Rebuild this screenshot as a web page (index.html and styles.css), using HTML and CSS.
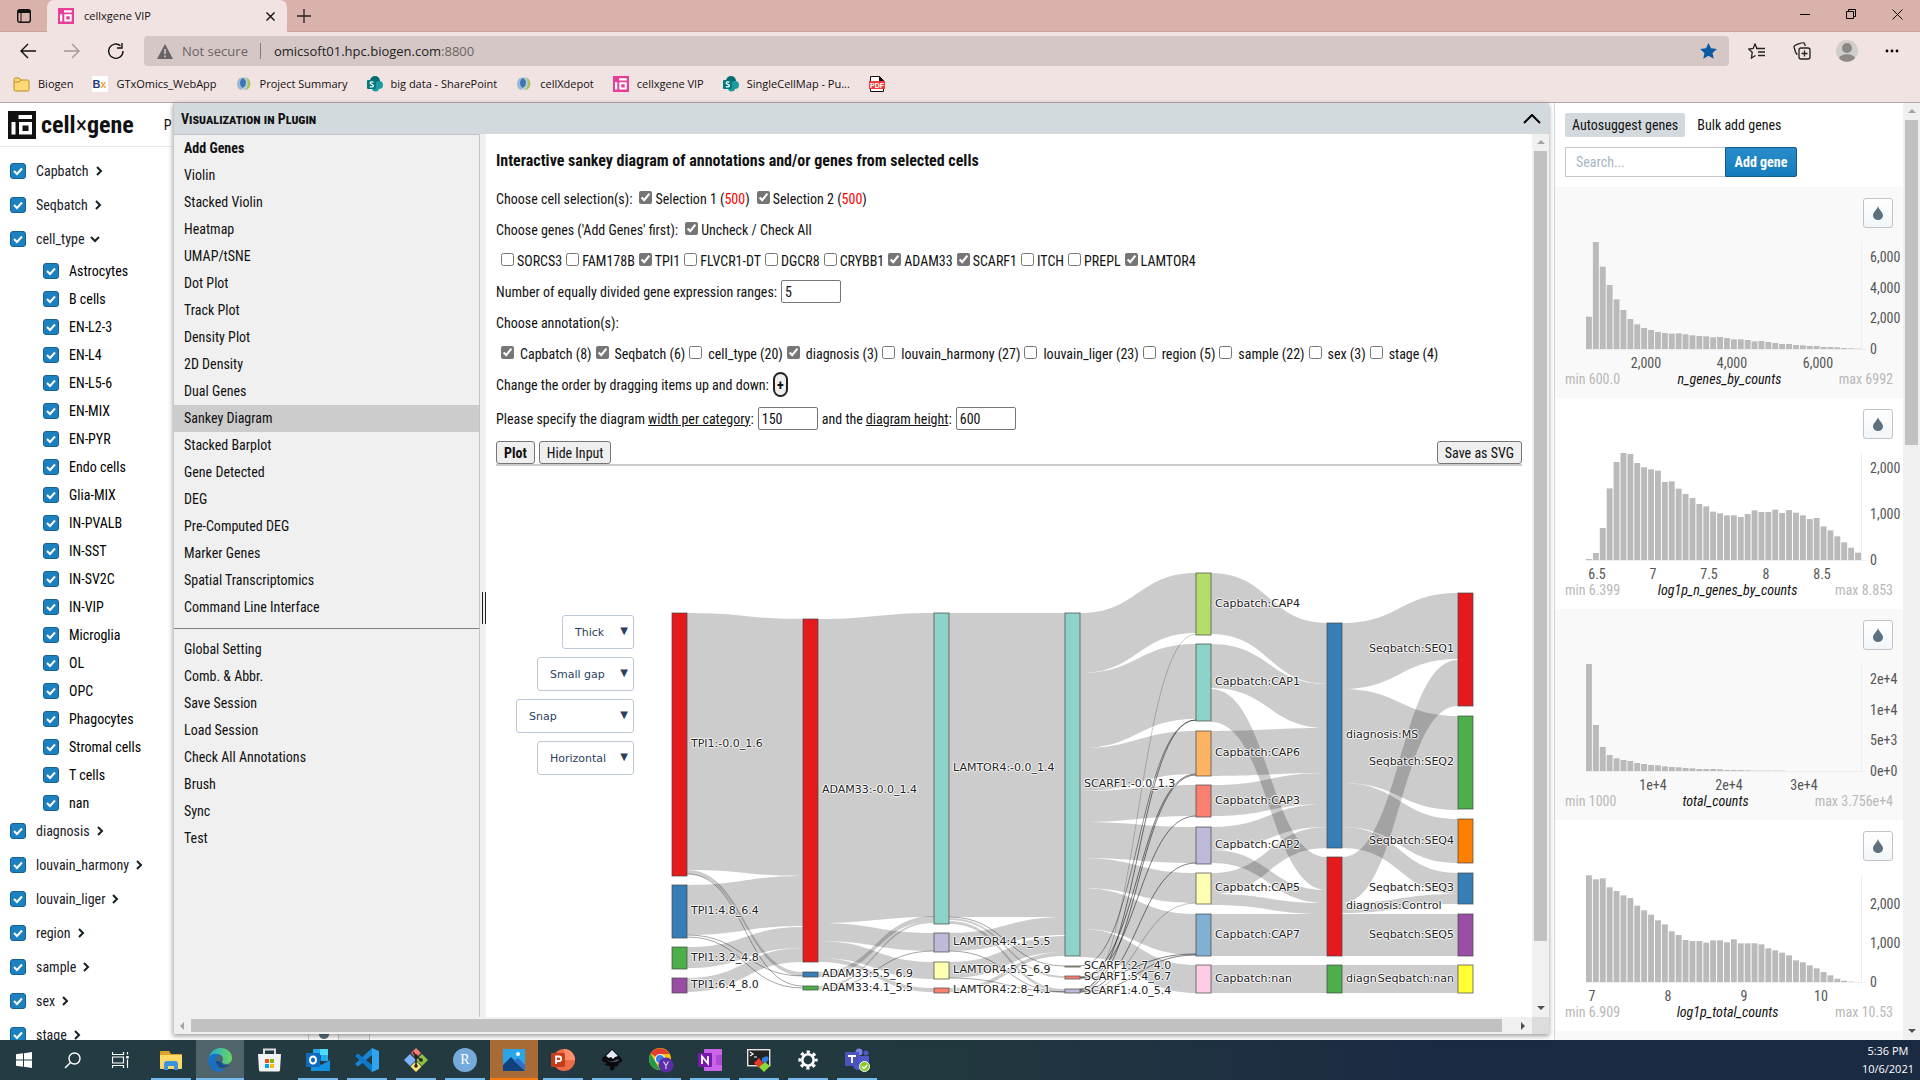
FILE: index.html
```html
<!DOCTYPE html>
<html lang="en">
<head>
<meta charset="utf-8">
<title>cellxgene VIP</title>
<link rel="stylesheet" href="styles.css">
</head>
<body>
<svg class="defs" aria-hidden="true">
  <symbol id="i-cxg" viewBox="0 0 28 28"><rect width="28" height="28" fill="currentColor"/><path d="M10.500 4H24v4H10.500zM3.500 11h4v12.500h-4zM11 11h13v12.500H11zm3.500 3.500v5.500h6v-5.500z" fill="#fff" fill-rule="evenodd"/></symbol>
  <symbol id="i-globe" viewBox="0 0 16 16"><circle cx="8" cy="7.500" r="6.500" fill="#b5cfe0"/><path d="M5 1.600A7 7 0 0 0 4.500 14C7 12 8 10 7.500 7S6 3 5 1.600z" fill="#9db9d6"/><path d="M7 2c4 2 4 7 0 10C3 10 3 4 7 2z" fill="#3d78b5"/><path d="M10 1.500a6.500 6.500 0 0 1-1 12.500c3-3 4-9 1-12.500z" fill="#a9c352"/></symbol>
  <symbol id="i-share" viewBox="0 0 16 16"><circle cx="8" cy="5" r="5" fill="#036c70"/><circle cx="12" cy="9" r="4" fill="#1a9ba1"/><circle cx="8.500" cy="12" r="3.500" fill="#1a9ba1"/><rect y="4" width="9" height="9" rx="1" fill="#03787c"/><path d="M6.500 6.300c-1-.600-3.400-.600-3.400.800 0 1.600 3.400 1 3.400 2.700 0 1.400-2.500 1.400-3.700.700" fill="none" stroke="#fff" stroke-width="1.200"/></symbol>
  <symbol id="i-right" viewBox="0 0 10 10"><path d="M3 1l4 4-4 4" fill="none" stroke="#182026" stroke-width="2"/></symbol>
  <symbol id="i-down" viewBox="0 0 10 10"><path d="M1 3l4 4 4-4" fill="none" stroke="#182026" stroke-width="2"/></symbol>
  <symbol id="i-drop" viewBox="0 0 10 14"><path d="M5 0C4 4 0 6 0 9.500a5 4.500 0 0 0 10 0C10 6 6 4 5 0z" fill="#5c7080"/></symbol>
</svg>

<header class="browser">
  <div class="tabstrip">
    <button class="tabmenu" aria-label="Tab actions"><svg width="14" height="14" viewBox="0 0 14 14"><rect x=".700" y=".700" width="12.600" height="12.600" rx="2" fill="none" stroke="#111" stroke-width="1.400"/><path d="M1 1h12v3H1z" fill="#111"/><path d="M4 3v10" stroke="#111"/></svg></button>
    <div class="tab"><svg class="pink" width="16" height="16"><use href="#i-cxg"/></svg><span>cellxgene VIP</span><button aria-label="Close tab"><svg width="9" height="9" viewBox="0 0 9 9"><path d="M.500.500l8 8m0-8l-8 8" stroke="#111" stroke-width="1.400"/></svg></button></div>
    <button class="newtab" aria-label="New tab"><svg width="14" height="14" viewBox="0 0 14 14"><path d="M7 0v14M0 7h14" stroke="#222" stroke-width="1.300"/></svg></button>
    <div class="winctl">
      <button aria-label="Minimize"><svg width="11" height="11"><path d="M0 5.500h10" stroke="#000"/></svg></button>
      <button aria-label="Restore"><svg width="11" height="11"><path d="M.500 2.500h7v7h-7zM2.500 2.500v-2h7v7h-2" fill="none" stroke="#000"/></svg></button>
      <button aria-label="Close"><svg width="11" height="11"><path d="M.500.500l10 10m0-10l-10 10" stroke="#000"/></svg></button>
    </div>
  </div>
  <div class="toolbar">
    <button aria-label="Back"><svg width="18" height="16" viewBox="0 0 18 16"><path d="M17 8H2m7-7L2 8l7 7" fill="none" stroke="#111" stroke-width="1.400"/></svg></button>
    <button aria-label="Forward"><svg width="18" height="16" viewBox="0 0 18 16"><path d="M1 8h15M9 1l7 7-7 7" fill="none" stroke="#a39998" stroke-width="1.400"/></svg></button>
    <button aria-label="Refresh"><svg width="18" height="18" viewBox="0 0 18 18"><path d="M16 9a7.200 7.200 0 1 1-2.500-5.300M15 1v5h-5" fill="none" stroke="#111" stroke-width="1.400"/></svg></button>
    <div class="address">
      <svg width="16" height="15" viewBox="0 0 16 15"><path d="M8 0l8 15H0z" fill="#666"/><path d="M8 5v5M8 11.500v1.800" stroke="#d5c7c6" stroke-width="1.600"/></svg>
      <span class="insecure">Not secure</span>
      <div class="url"><span>omicsoft01.hpc.biogen.com</span>:8800</div>
      <svg width="17" height="16" viewBox="0 0 24 23"><path d="M12 0l3.600 7.500 8.400 1-6.200 5.700 1.700 8.300L12 18.500l-7.500 4 1.700-8.300L0 8.500l8.400-1z" fill="#0b5aa6"/></svg>
    </div>
    <div class="tools">
      <button aria-label="Favorites"><svg width="18" height="16" viewBox="0 0 18 16"><path d="M9 5.500L7 1 5.200 5.400.800 6l3.400 3.200L3.500 15l4-2.500M8 5.500h9M10 9h7M10 12.500h7" fill="none" stroke="#222" stroke-width="1.300"/></svg></button>
      <button aria-label="Collections"><svg width="18" height="18" viewBox="0 0 18 18"><rect x="6" y="6" width="11" height="11" rx="2" fill="none" stroke="#222" stroke-width="1.300"/><path d="M11.500 8.500v6M8.500 11.500h6M4.500 12.500C3 12 1.500 7 1 4.500c0-1.500 9-4.500 10-3.500l1.500 3" fill="none" stroke="#222" stroke-width="1.300"/></svg></button>
      <button aria-label="Profile"><svg width="22" height="22" viewBox="0 0 22 22"><circle cx="11" cy="11" r="11" fill="#d0cdcb"/><circle cx="11" cy="8" r="5" fill="#8b8886"/><path d="M3 18c2-5 14-5 16 0-4 5-12 5-16 0z" fill="#8b8886"/></svg></button>
      <button aria-label="More"><svg width="14" height="4"><circle cx="2" cy="2" r="1.400"/><circle cx="7" cy="2" r="1.400"/><circle cx="12" cy="2" r="1.400"/></svg></button>
    </div>
  </div>
  <nav class="bookmarks" aria-label="Bookmarks">
    <a href="#"><svg width="17" height="15" viewBox="0 0 17 15"><path d="M1 2.500Q1 1 2.500 1H6l2 2h6.500Q16 3 16 4.500v8q0 1.500-1.500 1.500h-12Q1 14 1 12.500z" fill="#ffd978" stroke="#b98b1c"/><path d="M1.500 5H6l2-2" fill="none" stroke="#b98b1c"/></svg>Biogen</a>
    <a href="#"><span class="bx">B<i>x</i></span>GTxOmics_WebApp</a>
    <a href="#"><svg width="16" height="16"><use href="#i-globe"/></svg>Project Summary</a>
    <a href="#"><svg width="16" height="16"><use href="#i-share"/></svg>big data - SharePoint</a>
    <a href="#"><svg width="16" height="16"><use href="#i-globe"/></svg>cellXdepot</a>
    <a href="#"><svg class="pink" width="16" height="16"><use href="#i-cxg"/></svg>cellxgene VIP</a>
    <a href="#"><svg width="16" height="16"><use href="#i-share"/></svg>SingleCellMap - Pu...</a>
    <a href="#" aria-label="PDF"><svg class="pdf" width="16" height="16" viewBox="0 0 16 16"><path d="M1.500.500h9l4 4v11h-13z" fill="#fff" stroke="#111"/><path d="M10 0v5h5" fill="#111"/><rect y="5" width="16" height="8" fill="#f03c3c"/><text x="8" y="12" text-anchor="middle">PDF</text></svg></a>
  </nav>
</header>

<main class="app">
  <aside class="cats">
    <div class="brand"><svg width="28" height="28"><use href="#i-cxg"/></svg><strong>cell<small>×</small>gene</strong><span>P</span></div>
    <div class="catlist" id="cats"></div>
  </aside>

  <div class="stage">
    <section class="plugin">
      <header class="plughead"><h1>Visualization in Plugin</h1><button aria-label="Collapse"><svg width="18" height="10" viewBox="0 0 18 10"><path d="M1 9l8-8 8 8" fill="none" stroke="#000" stroke-width="2"/></svg></button></header>
      <div class="plugbody">
        <nav class="menu" id="menu" aria-label="Plugin functions"></nav>
        <div class="splitter"><i></i></div>
        <div class="content">
          <h2>Interactive sankey diagram of annotations and/or genes from selected cells</h2>
          <div class="row sel">Choose cell selection(s): <label><input type="checkbox" checked>Selection 1 (<b>500</b>)</label><label><input type="checkbox" checked>Selection 2 (<b>500</b>)</label></div>
          <div class="row sel">Choose genes ('Add Genes' first): <label><input type="checkbox" checked>Uncheck / Check All</label></div>
          <div class="row genes" id="genes"></div>
          <div class="row"><label for="nr">Number of equally divided gene expression ranges:</label><input id="nr" type="text" value="5"></div>
          <div class="row">Choose annotation(s):</div>
          <div class="row annos" id="annos"></div>
          <div class="row">Change the order by dragging items up and down: <button class="plus">+</button></div>
          <div class="row last"><label for="wc">Please specify the diagram <u>width per category</u>:</label><input id="wc" type="text" value="150"><label for="dh">and the <u>diagram height</u>:</label><input id="dh" type="text" value="600"></div>
          <div class="actions"><button class="btn"><strong>Plot</strong></button><button class="btn">Hide Input</button><button class="btn save">Save as SVG</button></div>
          <div class="chart">
            <div class="opts">
              <span class="pick"><select class="w1" aria-label="Node thickness"><option>Thick</option></select></span>
              <span class="pick"><select class="w2" aria-label="Gap"><option>Small gap</option></select></span>
              <span class="pick"><select class="w3" aria-label="Arrangement"><option>Snap</option></select></span>
              <span class="pick"><select class="w2" aria-label="Orientation"><option>Horizontal</option></select></span>
            </div>
            <svg id="sankey" class="sankey" width="850" height="440" viewBox="650 563 850 440" role="img" aria-label="Sankey diagram"></svg>
          </div>
        </div>
        <div class="vbar"><i class="up"></i><i class="track"><i class="thumb"></i></i><i class="dn"></i></div>
      </div>
      <div class="hbar"><i class="lf"></i><i class="track"><i class="thumb"></i></i><i class="rt"></i><i class="corner"></i></div>
    </section>
    <div class="under"><span><svg width="10" height="14"><use href="#i-drop"/></svg></span><span></span></div>
  </div>

  <aside class="right">
    <div class="panel">
      <div class="genetabs"><button class="on">Autosuggest genes</button><button>Bulk add genes</button></div>
      <div class="search"><input type="text" placeholder="Search..." aria-label="Search genes"><button>Add gene</button></div>
      <div id="hists"></div>
    </div>
    <div class="vbar page"><i class="up"></i><i class="track"><i class="thumb"></i></i><i class="dn"></i></div>
  </aside>
</main>

<footer class="taskbar">
  <button aria-label="Start"><svg width="16" height="16" viewBox="0 0 16 16"><path d="M0 2.300L7 1.300V7.500H0zM8 1.200L16 0v7.500H8zM0 8.500h7v6.200l-7-1zM8 8.500h8V16l-8-1.200z" fill="#fff"/></svg></button>
  <button aria-label="Search"><svg width="17" height="17" viewBox="0 0 17 17"><circle cx="10.500" cy="6.500" r="5.500" fill="none" stroke="#fff" stroke-width="1.400"/><path d="M6.500 10.500L1 16" stroke="#fff" stroke-width="1.400"/></svg></button>
  <button class="gap" aria-label="Task view"><svg width="17" height="16" viewBox="0 0 17 16"><path d="M.500 0v2.500h11V0M.500 16v-2.500h11V16M.500 5h11v6H.500zM15.500 0v2.500M15.500 7.500V16" fill="none" stroke="#fff" stroke-width="1.200"/><rect x="14.200" y="4" width="2.500" height="2.500" fill="#fff"/></svg></button>
  <button class="run" aria-label="File Explorer"><svg width="22" height="19" viewBox="0 0 22 19"><path d="M0 1q0-1 1-1h8l2 3h10q1 0 1 1v13H0z" fill="#e0a12b"/><path d="M0 4h22v13q0 1-1 1H1q-1 0-1-1z" fill="#ffd968"/><path d="M4 19v-6q0-3 3-3h8q3 0 3 3v6h-4v-4H8v4z" fill="#3d93dd"/></svg></button>
  <button class="run edge" aria-label="Microsoft Edge"><svg width="24" height="24" viewBox="0 0 24 24"><defs><linearGradient id="eg" x1="0" x2="1"><stop offset="0" stop-color="#1ea7e4"/><stop offset="1" stop-color="#6ad75a"/></linearGradient></defs><path d="M.500 12C1 5 6 0 12.500 0 20 0 24 5 24 10c0 4-3 6-6 6s-4-1.500-4-2c0-.500 1-1 1-3 0-3-3-5-6.500-5S1 8 .500 12z" fill="url(#eg)"/><path d="M.500 12c0-4 3.500-6 7-6 3 0 4 1 4 1-3 1-4 4-4 7 0 5 5 9 10 7-5 6-17 2-17-9z" fill="#1471c7"/><path d="M8 13c0 5 5 8 9 6.500 2-.500 4-2 5-3-4 2-9 1-9-3z" fill="#0c4f9a"/></svg></button>
  <button aria-label="Microsoft Store"><svg width="23" height="24" viewBox="0 0 23 24"><path d="M6 8V1.500h11V8" fill="none" stroke="#ddd" stroke-width="2"/><path d="M0 6h23l-1 16q0 1.500-1.500 1.500h-18Q1 23.500 1 22z" fill="#f3f3f3"/><path d="M7 11h4v4H7z" fill="#f25022"/><path d="M12 11h4v4h-4z" fill="#7fba00"/><path d="M7 16h4v4H7z" fill="#00a4ef"/><path d="M12 16h4v4h-4z" fill="#ffb900"/></svg></button>
  <button class="run" aria-label="Outlook"><svg width="24" height="22" viewBox="0 0 24 22"><path d="M7 0h15v12H7z" fill="#28a8ea"/><path d="M14 0h8v6h-8z" fill="#50d9ff"/><path d="M7 6h8v6H7z" fill="#0364b8"/><path d="M5 11l10 5 9-5v11H5z" fill="#1490df"/><rect y="4" width="14" height="14" rx="1" fill="#0f6cbd"/><ellipse cx="7" cy="11" rx="3" ry="3.500" fill="none" stroke="#fff" stroke-width="2"/></svg></button>
  <button class="run" aria-label="VS Code"><svg width="24" height="24" viewBox="0 0 24 24"><path d="M17 0l7 3v18l-7 3z" fill="#2fa4f1"/><path d="M17 0v7L3 18.500l-3-2.500z" fill="#1a86d6"/><path d="M17 24v-7L3 5.500 0 8z" fill="#0f79c9"/></svg></button>
  <button class="run" aria-label="Git"><svg width="24" height="24" viewBox="0 0 24 24"><path d="M12 0l5 5-5 5-5-5z" fill="#f27d75"/><path d="M6 6l6 6-6 6-6-6z" fill="#80b3ff"/><path d="M18 6l6 6-6 6-6-6z" fill="#8dc149"/><path d="M12 13l5.500 5.500L12 24l-5.500-5.500z" fill="#ffe673"/><path d="M9 4l3 4v10M12 8l5 4" fill="none" stroke="#222" stroke-width="1.500"/><circle cx="12" cy="18" r="1.800" fill="#222"/><circle cx="17" cy="12" r="1.800" fill="#222"/><circle cx="12" cy="8" r="1.800" fill="#222"/></svg></button>
  <button class="run" aria-label="R"><span class="rlogo">R</span></button>
  <button class="run photos" aria-label="Photos"><svg width="22" height="22" viewBox="0 0 22 22"><rect width="22" height="22" fill="#2aa5ea"/><path d="M0 16l8-8 14 14H0z" fill="#11427e"/><path d="M11 12l4-3 7 7v6z" fill="#2f6fc4"/><circle cx="15" cy="5" r="2" fill="#fff"/></svg></button>
  <button class="run" aria-label="PowerPoint"><svg width="24" height="22" viewBox="0 0 24 22"><circle cx="13" cy="11" r="11" fill="#ed6c47"/><path d="M13 0a11 11 0 0 1 11 11H13z" fill="#ff8f6b"/><rect y="4" width="14" height="14" rx="1" fill="#c43e1c"/><path d="M5 15V7.500h3q2.200 0 2.200 2.300T8 12H5" fill="none" stroke="#fff" stroke-width="1.800"/></svg></button>
  <button class="run" aria-label="Inkscape"><svg width="22" height="22" viewBox="0 0 22 22"><path d="M11 0l9 9q3 3-1 4.500-3 1-1 2.500-3 1.500-4 1.500l-1 3-2 1.500-2-2v-3q-5 0-5-2 4-1-1-2-4-1.500-1-4.500z" fill="#0a0a0a"/><path d="M11 1l6 6-3 1-2 2-2-2-2 1-3-2z" fill="#e3ebf7"/><path d="M3 10q8 4 12 1 2 0 4-1-5 6-16 0z" fill="#5a6c8a"/></svg></button>
  <button class="run" aria-label="Chrome"><svg width="25" height="25" viewBox="0 0 25 25"><circle cx="11" cy="11" r="11" fill="#fbc116"/><path d="M11 11L1.500 5.500A11 11 0 0 1 20.500 6H11z" fill="#e33b2e"/><path d="M1.500 5.500l5 8.500L11 22A11 11 0 0 1 1.500 5.500z" fill="#229a4b"/><circle cx="11" cy="11" r="5" fill="#fff"/><circle cx="11" cy="11" r="4" fill="#3b7ded"/><circle cx="17" cy="17" r="7.500" fill="#5b2ea6"/><path d="M14.500 13.500l2.500 4 2.500-4M17 17v4" fill="none" stroke="#d9c8ff" stroke-width="1.200"/></svg></button>
  <button class="run" aria-label="OneNote"><svg width="24" height="22" viewBox="0 0 24 22"><rect x="6" width="18" height="22" rx="1" fill="#ca64ea"/><path d="M18 6h6v5h-6zM18 11h6v5h-6z" fill="#ae4bd5"/><rect y="4" width="14" height="14" rx="1" fill="#7719aa"/><path d="M4 15V7.500l6 7V7" fill="none" stroke="#fff" stroke-width="1.800"/></svg></button>
  <button class="run" aria-label="Terminal"><svg width="24" height="24" viewBox="0 0 24 24"><rect x=".700" y="1.700" width="22" height="16" fill="#222" stroke="#e5e5e5" stroke-width="1.400"/><path d="M3 4l3 2-3 2M7 9h3" fill="none" stroke="#fff" stroke-width="1.200"/><path d="M7 15l5-5 4 5-4 5z" fill="#e8392b"/><path d="M15 10l5-2 2 3-3 4-4-1z" fill="#2f7de0"/><path d="M12 19l6-5 5 4-6 6z" fill="#8dd63a"/></svg></button>
  <button class="run" aria-label="Settings"><svg width="20" height="20" viewBox="0 0 20 20"><circle cx="10" cy="10" r="5.700" fill="none" stroke="#fff" stroke-width="2.600"/><circle cx="10" cy="10" r="8.200" fill="none" stroke="#fff" stroke-width="2.800" stroke-dasharray="3.220 3.220" stroke-dashoffset="1.600"/></svg></button>
  <button class="run" aria-label="Teams"><svg width="25" height="24" viewBox="0 0 25 24"><circle cx="14" cy="4" r="3.500" fill="#7b83eb"/><circle cx="21" cy="5" r="2.500" fill="#5059c9"/><path d="M8 8h16v9q0 4-4 5h-8q-4-1-4-6z" fill="#5059c9"/><rect y="4" width="14" height="14" rx="1" fill="#4b53bc"/><path d="M3 8h8M7 8v7" stroke="#fff" stroke-width="1.800"/><circle cx="19.500" cy="18.500" r="5" fill="#8ac926" stroke="#fff"/><path d="M17 18.500l2 2 3-3.500" fill="none" stroke="#fff" stroke-width="1.400"/></svg></button>
  <div class="clock"><span>5:36 PM</span><span>10/6/2021</span></div>
</footer>
<script src="app.js"></script>
</body>
</html>
```
FILE: styles.css
```css
* { box-sizing: border-box; }
html, body { height: 100%; }
body { margin: 0; display: flex; flex-direction: column; overflow: hidden; background: #fff; color: #111; font: 14px/18px "Roboto Condensed", Roboto, sans-serif; }
button, input, select { font: inherit; color: inherit; margin: 0; padding: 0; }
button { background: none; border: 0; display: flex; align-items: center; justify-content: center; }
svg { display: block; flex: none; }
.defs { position: absolute; width: 0; height: 0; }
a { color: inherit; text-decoration: none; }
.pink { color: #e83e98; }

/* Browser frame */
.browser { flex: none; height: 103px; background: #f1e3e1; border-bottom: 1px solid #b5a7a9; font: 11px/16px "Open Sans", "Noto Sans", sans-serif; }
.tabstrip { display: flex; height: 32px; background: #d9b2ac; box-shadow: inset 0 -1px #cfa39d; }
.tabmenu { width: 47px; }
.tab { display: flex; align-items: center; width: 240px; padding: 0 12px 0 11px; gap: 10px; background: #f1e3e1; border-radius: 7px 7px 0 0; }
.tab span { flex: 1; }
.newtab { width: 34px; }
.winctl { display: flex; margin-left: auto; }
.winctl button { width: 46px; height: 28px; }
.toolbar { display: flex; align-items: center; height: 38px; padding: 0 6px; }
.toolbar > button { width: 44px; height: 36px; }
.address { flex: 1; display: flex; align-items: center; height: 30px; margin: 0 5px 0 6px; padding: 0 12px 0 13px; background: #d5c7c6; border-radius: 4px; font-size: 13px; color: #6b6463; }
.insecure { margin-left: 9px; padding-right: 12px; border-right: 1px solid #857c7b; }
.url { flex: 1; margin-left: 13px; }
.url span { color: #222; }
.tools { display: flex; }
.tools button { width: 45px; height: 36px; }
.bookmarks { display: flex; gap: 19px; height: 28px; padding-left: 13px; align-items: center; }
.bookmarks a { display: flex; align-items: center; gap: 8px; }
.bx { width: 16px; background: #fff; color: #2b3a80; font: bold 11px/16px "Liberation Sans", sans-serif; }
.bx i { color: #eda33a; font-style: normal; }
.pdf text { fill: #fff; font: bold 7px "Liberation Sans", sans-serif; }

/* Application */
.app { flex: 1; min-height: 0; display: flex; }
.cats { flex: none; width: 173px; overflow: hidden; display: flex; flex-direction: column; }
.brand { flex: none; display: flex; align-items: center; height: 44px; padding: 1px 0 0 8px; border-bottom: 1px solid #e6e9eb; }
.brand strong { margin-left: 5px; font-size: 24px; line-height: 28px; }
.brand small { font-size: 24px; font-weight: 400; }
.brand span { margin-left: 30px; }
.catlist { padding-top: 7px; }
.cat, .leaf { display: flex; align-items: center; gap: 10px; height: 34px; padding-left: 10px; color: #182026; }
.cat svg { margin-left: -5px; }
.leaves { margin: 1px 0 -3px; }
.leaf { height: 28px; padding-left: 43px; color: #000; }
.cats input { appearance: none; width: 16px; height: 16px; border-radius: 3px; border: 1px solid #136196; background: #1d80bf url("data:image/svg+xml,%3Csvg xmlns='http://www.w3.org/2000/svg' viewBox='0 0 14 14'%3E%3Cpath d='M3 7l3 3 5-5.500' fill='none' stroke='white' stroke-width='2'/%3E%3C/svg%3E") center; }

.stage { flex: 1; min-width: 0; display: flex; flex-direction: column; margin-right: 5px; }
.plugin { position: relative; flex: 1; min-height: 0; display: flex; flex-direction: column; background: #fff; border-left: 1px solid #c9c9c9; box-shadow: 0 2px 5px rgba(0,0,0,.4); }
.plughead { flex: none; display: flex; align-items: center; justify-content: space-between; height: 31px; padding: 0 8px 0 7px; background: #d3dadd; }
h1 { margin: 0; font-size: 14px; font-variant: small-caps; }
.plugbody { flex: 1; min-height: 0; display: flex; }
.menu { flex: none; width: 306px; background: #f0f0f0; border: solid #c4c4c4; border-width: 1px 1px 0 0; overflow: hidden; }
.menu a { display: block; padding: 0 10px; line-height: 27px; }
.menu a:first-child { font-weight: 700; }
.menu .active { background: #ccc; }
.menu hr { margin: 7px 0; border: 0; border-top: 1px solid #808080; }
.splitter { flex: none; width: 6px; display: flex; align-items: center; padding: 64px 0 0 2px; background: #f0f0f0; }
.splitter i { width: 4px; height: 32px; border: solid #222; border-width: 0 1px; }
.content { flex: 1; min-width: 0; overflow: hidden; padding: 0 10px; }
h2 { margin: 0; padding-top: 3px; font-size: 16px; line-height: 47px; height: 49px; }
.row { display: flex; align-items: center; height: 31px; gap: 4px; white-space: nowrap; }
.row.last { height: 37px; }
.row input[type=checkbox] { width: 13px; height: 13px; margin: 0 0 3px; accent-color: #767676; }
.row label { display: flex; align-items: center; }
.row u { margin-left: 3px; }
.row.sel { gap: 7px; }
.row.sel input, .row.genes input { margin-right: 3px; }
.sel b { color: #f00; font-weight: 400; }
.genes { padding-left: 5px; }
.annos { padding-left: 5px; }
.annos label { gap: 6px; }
.row input[type=text] { width: 60px; height: 23px; padding: 0 3px; border: 1px solid #767676; border-radius: 2px; }
.plus { width: 15px; height: 25px; background: #efefef; border: 2px solid #222; border-radius: 8px; font-weight: 700; }
.actions { display: flex; gap: 4px; margin-top: 4px; border-bottom: 2px solid #ccc; }
.btn { height: 23px; padding: 0 7px; background: #efefef; border: 1px solid #767676; border-radius: 3px; }
.save { margin-left: auto; }
.chart { display: flex; gap: 17px; padding-top: 97px; }
.opts { flex: none; width: 138px; display: flex; flex-direction: column; align-items: flex-end; gap: 8px; padding-top: 52px; font: 11px "DejaVu Sans", sans-serif; color: #2a3f5f; }
.pick { position: relative; display: block; }
.pick::after { content: "▼"; position: absolute; right: 6px; top: 10px; font-size: 10px; pointer-events: none; }
.pick select { display: block; appearance: none; height: 34px; padding: 0 12px; background: #fff; border: 1px solid #bec8d9; border-radius: 3px; }
.w1 { width: 72px; }
.w2 { width: 97px; }
.w3 { width: 118px; }
.sankey { margin-left: -1px; }
.sankey text { font: 11px "DejaVu Sans", sans-serif; fill: #222; text-shadow: 0 0 1px #fff, 0 1px 1px #fff, 1px 0 1px #fff, -1px 0 1px #fff, 0 -1px 1px #fff; }

/* Scroll bars */
.vbar { flex: none; width: 17px; display: flex; flex-direction: column; background: #f0f0f0; }
.hbar { flex: none; height: 17px; display: flex; background: #f0f0f0; }
.vbar .track { flex: 1; padding: 0 2px; }
.hbar .track { flex: 1; padding: 2px 0; }
.track, .thumb { display: block; }
.thumb { background: #c1c1c1; }
.vbar .thumb { height: 93%; }
.page .thumb { height: 36%; }
.hbar .thumb { height: 13px; width: 99%; }
.up, .dn, .lf, .rt, .corner { flex: none; width: 17px; height: 17px; display: block; }
.corner { background: #dcdcdc; }
.up::before, .dn::before, .lf::before, .rt::before { content: ""; display: block; width: 8px; height: 4px; margin: 6px 0 0 5px; background: #a3a3a3; }
.up, .dn, .lf, .rt { overflow: hidden; display: flow-root; }
.up::before { clip-path: polygon(0 100%, 50% 0, 100% 100%); }
.dn::before { clip-path: polygon(0 0, 100% 0, 50% 100%); background: #505050; }
.lf::before, .rt::before { width: 4px; height: 8px; margin: 5px 0 0 6px; }
.lf::before { clip-path: polygon(0 50%, 100% 0, 100% 100%); }
.rt::before { clip-path: polygon(0 0, 100% 50%, 0 100%); background: #505050; }
.under { flex: none; display: flex; height: 6px; padding-left: 135px; }
.under span { width: 31px; display: flex; justify-content: center; border: solid #ccc; border-width: 0 1px; overflow: hidden; }
.under svg { margin-top: -9px; }
.under span + span { border-left: 0; background: #f5f5f5; }

/* Histogram panel */
.right { flex: none; width: 366px; display: flex; border-left: 1px solid #ccd9e0; }
.panel { flex: 1; min-width: 0; overflow: hidden; }
.genetabs { display: flex; gap: 5px; padding: 10px 10px 0; }
.genetabs button { height: 24px; padding: 0 7px; border-radius: 2px; }
.genetabs .on { background: #d3dadd; }
.search { display: flex; padding: 10px; }
.search input { width: 160px; height: 30px; padding: 0 10px; border: 1px solid #c2c8cc; border-right: 0; outline: 0; }
.search input::placeholder { color: #a7b6c2; opacity: 1; }
.search button { width: 72px; height: 30px; color: #fff; font-weight: 700; border: 1px solid #125a8c; border-radius: 0 2px 2px 0; background: linear-gradient(#2a8cca, #137cbd); }
.card { height: 211px; padding: 11px 10px 0; }
.card:nth-child(odd) { background: #f9f9f9; }
.card button { width: 30px; height: 30px; margin-left: auto; border: 1px solid #c0c4c8; border-radius: 3px; background: linear-gradient(#fff, #f2f6f9); }
.card .hist { overflow: visible; }
.hist rect { fill: #bababa; }
.hist text { fill: #555; }
.meta { display: flex; justify-content: space-between; color: #b8b8b8; }
.meta em { color: #111; }

/* Taskbar */
.taskbar { flex: none; display: flex; height: 40px; background: linear-gradient(90deg, #233b42, #22383f 50%, #1b2a43 75%); }
.taskbar button { width: 48px; margin-right: 1px; position: relative; }
.taskbar button:nth-child(-n+2) { margin-right: 0; }
.taskbar .gap { margin-right: 3px; }
.run::after { content: ""; position: absolute; left: 4px; right: 4px; bottom: 0; height: 2px; background: #76b9ed; }
.taskbar .edge { background: #50656b; }
.taskbar .photos { background: #a96b36; }
.edge::after, .photos::after { left: 0; right: 0; }
.photos::after { background: #ff7a0d; }
.rlogo { width: 24px; border-radius: 50%; background: #75aadb; color: #fff; font: 14px/24px "Liberation Serif", serif; text-align: center; }
.clock { margin-left: auto; padding: 2px 6px 0 0; display: flex; flex-direction: column; align-items: center; color: #fff; font: 11px/18px "Open Sans", "Noto Sans", sans-serif; }
```
FILE: app.js
```js
const el = id => document.getElementById(id);

// Category tree
const box = (name, cls, icon) =>
  `<label class="${cls}"><input type="checkbox" checked>${name}${icon ? `<svg width="10" height="10"><use href="#${icon}"/></svg>` : ""}</label>`;
const leaves = ["Astrocytes", "B cells", "EN-L2-3", "EN-L4", "EN-L5-6", "EN-MIX", "EN-PYR", "Endo cells", "Glia-MIX", "IN-PVALB",
  "IN-SST", "IN-SV2C", "IN-VIP", "Microglia", "OL", "OPC", "Phagocytes", "Stromal cells", "T cells", "nan"];
el("cats").innerHTML =
  ["Capbatch", "Seqbatch"].map(n => box(n, "cat", "i-right")).join("") + box("cell_type", "cat", "i-down") +
  `<div class="leaves">${leaves.map(n => box(n, "leaf")).join("")}</div>` +
  ["diagnosis", "louvain_harmony", "louvain_liger", "region", "sample", "sex", "stage"].map(n => box(n, "cat", "i-right")).join("");

// Plugin menu
const link = n => `<a href="#"${n === "Sankey Diagram" ? ' class="active"' : ""}>${n}</a>`;
el("menu").innerHTML = ["Add Genes", "Violin", "Stacked Violin", "Heatmap", "UMAP/tSNE", "Dot Plot", "Track Plot", "Density Plot", "2D Density",
  "Dual Genes", "Sankey Diagram", "Stacked Barplot", "Gene Detected", "DEG", "Pre-Computed DEG", "Marker Genes",
  "Spatial Transcriptomics", "Command Line Interface"].map(link).join("") + "<hr>" +
  ["Global Setting", "Comb. &amp; Abbr.", "Save Session", "Load Session", "Check All Annotations", "Brush", "Sync", "Test"].map(link).join("");

// Gene and annotation tick boxes; a leading * marks a ticked one
const ticks = list => list.map(n => `<label><input type="checkbox"${n[0] === "*" ? " checked" : ""}>${n.replace("*", "")}</label>`).join("");
el("genes").innerHTML = ticks(["SORCS3", "FAM178B", "*TPI1", "FLVCR1-DT", "DGCR8", "CRYBB1", "*ADAM33", "*SCARF1", "ITCH", "PREPL", "*LAMTOR4"]);
el("annos").innerHTML = ticks(["*Capbatch (8)", "*Seqbatch (6)", "cell_type (20)", "*diagnosis (3)", "louvain_harmony (27)",
  "louvain_liger (23)", "region (5)", "sample (22)", "sex (3)", "stage (4)"]);

// Sankey: columns of [label, top, bottom, colour]
const colX = [672, 803, 934, 1065, 1196, 1327, 1458];
const nodes = [
  [["TPI1:-0.0_1.6", 613, 876, "#e41a1c"], ["TPI1:4.8_6.4", 885, 938, "#377eb8"], ["TPI1:3.2_4.8", 947, 969, "#4daf4a"], ["TPI1:6.4_8.0", 978, 993, "#984ea3"]],
  [["ADAM33:-0.0_1.4", 619, 962, "#e41a1c"], ["ADAM33:5.5_6.9", 972, 977, "#377eb8"], ["ADAM33:4.1_5.5", 986, 990, "#4daf4a"]],
  [["LAMTOR4:-0.0_1.4", 613, 924, "#8dd3c7"], ["LAMTOR4:4.1_5.5", 933, 952, "#bebada"], ["LAMTOR4:5.5_6.9", 962, 979, "#ffffb3"], ["LAMTOR4:2.8_4.1", 988, 993, "#fb8072"]],
  [["SCARF1:-0.0_1.3", 613, 956, "#8dd3c7"], ["SCARF1:2.7_4.0", 966, 967, "#ffffb3"], ["SCARF1:5.4_6.7", 976, 979, "#fb8072"], ["SCARF1:4.0_5.4", 989, 993, "#bebada"]],
  [["Capbatch:CAP4", 573, 635, "#b3de69"], ["Capbatch:CAP1", 644, 721, "#8dd3c7"], ["Capbatch:CAP6", 731, 776, "#fdb462"], ["Capbatch:CAP3", 785, 817, "#fb8072"],
   ["Capbatch:CAP2", 827, 864, "#bebada"], ["Capbatch:CAP5", 873, 904, "#ffffb3"], ["Capbatch:CAP7", 914, 956, "#80b1d3"], ["Capbatch:nan", 965, 993, "#fccde5"]],
  [["diagnosis:MS", 623, 848, "#377eb8"], ["diagnosis:Control", 857, 956, "#e41a1c"], ["diagn", 965, 993, "#4daf4a"]],
  [["Seqbatch:SEQ1", 593, 706, "#e41a1c"], ["Seqbatch:SEQ2", 716, 809, "#4daf4a"], ["Seqbatch:SEQ4", 819, 863, "#ff7f00"], ["Seqbatch:SEQ3", 873, 904, "#377eb8"],
   ["Seqbatch:SEQ5", 914, 956, "#984ea3"], ["Seqbatch:nan", 965, 993, "#ffff33"]]
];
// Links per gap between columns: [source top, target top, thickness]
const links = [
  [[613, 619, 257], [870, 972, 4], [874, 986, 1], [885, 876, 50], [935, 976, 1], [937, 988, 1], [947, 927, 21], [978, 948, 14]],
  [[619, 613, 304], [923, 933, 18], [941, 962, 17], [958, 988, 4], [972, 916, 5], [986, 921, 2], [989, 951, 1]],
  [[613, 613, 304], [917, 966, 1], [918, 976, 2], [921, 989, 3], [933, 917, 18], [951, 992, 1], [962, 936, 16], [978, 992, 1], [988, 952, 4]],
  [[613, 573, 60], [673, 644, 75], [748, 731, 43], [791, 785, 31], [822, 827, 36], [858, 873, 30], [888, 914, 41], [929, 965, 28],
   [990, 634, .2], [966, 720, .6], [989, 720, 1], [977, 774, 1], [990, 775, 1], [978, 816, 1], [991, 863, 1], [992, 903, .3], [978, 954, 1], [992, 955, 1]],
  [[573, 623, 61], [644, 684, 44], [689, 857, 33], [731, 728, 45], [785, 773, 31], [827, 804, 23], [850, 890, 13], [873, 827, 21], [894, 903, 11], [914, 914, 42], [965, 965, 28]],
  [[623, 593, 66], [689, 716, 94], [783, 819, 44], [827, 873, 21], [857, 660, 46], [903, 894, 10], [914, 914, 42], [965, 965, 28]]
];
let out = "";
links.forEach((group, c) => group.forEach(([a, b, t]) => {
  const x0 = colX[c] + 15, x1 = colX[c + 1], m = (x0 + x1) / 2;
  out += t <= 1
    ? `<path d="M${x0} ${a}C${m} ${a} ${m} ${b} ${x1} ${b}" fill="none" stroke="#000" stroke-opacity="${t < 1 ? t / 2 + .1 : c === 3 ? .5 : .35}"/>`
    : `<path d="M${x0} ${a}C${m} ${a} ${m} ${b} ${x1} ${b}V${b + t}C${m} ${b + t} ${m} ${a + t} ${x0} ${a + t}z" fill="#000" fill-opacity=".2"/>`;
}));
nodes.forEach((col, c) => col.forEach(([, a, b, fill]) => {
  out += `<rect x="${colX[c]}" y="${a}" width="15" height="${b - a}" fill="${fill}" stroke="#444" stroke-opacity=".7"/>`;
}));
nodes.forEach((col, c) => col.forEach(([name, a, b]) => {
  const end = c === 6;
  out += `<text x="${end ? colX[c] - 4 : colX[c] + 19}" y="${Math.floor((a + b) / 2) + 3}" text-anchor="${end ? "end" : "start"}">${name}</text>`;
}));
el("sankey").innerHTML = out;

// Histograms: bar heights are in thirds of a pixel
const hists = [
  { name: "n_genes_by_counts", min: "600.0", max: "6992", x: [["2,000", 81], ["4,000", 167], ["6,000", 253]], y: [["6,000", 92], ["4,000", 61], ["2,000", 31], ["0", 0]],
    bars: [97,321,247,192,149,117,90,74,63,57,51,48,46,47,44,41,39,38,35,36,33,29,29,27,23,24,21,18,15,15,12,11,9,9,6,6,5,3,2,1] },
  { name: "log1p_n_genes_by_counts", min: "6.399", max: "8.853", x: [["6.5", 32], ["7", 88], ["7.5", 144], ["8", 201], ["8.5", 257]], y: [["2,000", 92], ["1,000", 46], ["0", 0]],
    bars: [3,21,96,215,294,321,318,291,278,272,268,234,236,214,198,186,168,161,145,140,134,134,129,138,149,144,144,151,141,150,142,134,123,126,101,89,71,53,37,22] },
  { name: "total_counts", min: "1000", max: "3.756e+4", x: [["1e+4", 88], ["2e+4", 164], ["3e+4", 239]], y: [["2e+4", 92], ["1e+4", 61], ["5e+3", 31], ["0e+0", 0]],
    bars: [321,138,72,48,38,33,30,24,21,18,17,14,12,11,9,8,6,6,6,5,3,3,3,2,1,1,1,1,1] },
  { name: "log1p_total_counts", min: "6.909", max: "10.53", x: [["7", 27], ["8", 103], ["9", 179], ["10", 256]], y: [["2,000", 78], ["1,000", 39], ["0", 0]],
    bars: [320,308,311,284,273,260,252,229,215,202,185,173,152,141,126,123,123,118,125,125,119,128,116,116,116,113,101,95,88,80,65,59,50,41,30,20,10,4,1] }
];
el("hists").innerHTML = hists.map(h => `<div class="card"><button aria-label="Color by ${h.name}"><svg width="10" height="14"><use href="#i-drop"/></svg></button>
<svg class="hist" width="328" height="142">
${h.bars.map((v, i) => `<rect x="${21 + i * 6.9}" y="${121 - v / 3}" width="5.9" height="${v / 3}"/>`).join("")}
<path d="M296.500 14v107.500M21 121.500h280" stroke="#eee" fill="none"/>
${h.x.map(([t, x]) => `<text x="${x}" y="140" text-anchor="middle">${t}</text>`).join("")}
${h.y.map(([t, y]) => `<text x="305" y="${126 - y}">${t}</text>`).join("")}
</svg><div class="meta"><span>min ${h.min}</span><em>${h.name}</em><span>max ${h.max}</span></div></div>`).join("") + '<div class="card"></div>';
```
